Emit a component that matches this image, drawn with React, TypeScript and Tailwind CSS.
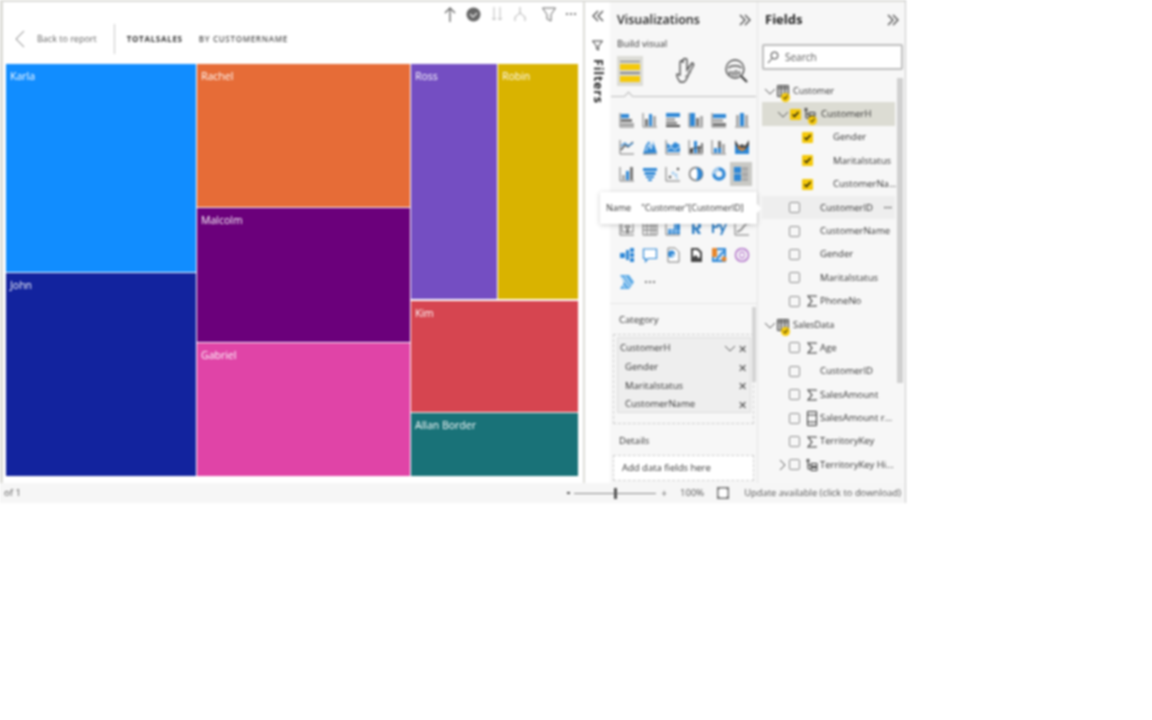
import type { ReactNode } from "react";

const B = "#2f88d6";
const G = "#777777";
const D = "#444";

function Ico({ children, size = 16 }: { children: ReactNode; size?: number }) {
  return (
    <svg width={size} height={size} viewBox="0 0 16 16" fill="none">
      {children}
    </svg>
  );
}

const axis = <path d="M1 1v14h14" stroke={G} strokeWidth="1" />;

// visual gallery, left to right, top to bottom
const vizIcons: ReactNode[] = [
  <>{axis}<rect x="2" y="2" width="8" height="4" fill={B} /><rect x="2" y="7" width="11" height="3" fill={G} /><rect x="2" y="11" width="13" height="3" fill="#aaa" /></>,
  <>{axis}<rect x="3" y="7" width="3" height="7" fill={G} /><rect x="7" y="2" width="3" height="12" fill={B} /><rect x="11" y="4" width="3" height="10" fill="#aaa" /></>,
  <><rect x="1" y="1" width="14" height="4" fill={B} /><rect x="1" y="6" width="9" height="3" fill="#aaa" /><rect x="1" y="10" width="11" height="2" fill={G} /><rect x="1" y="13" width="14" height="2" fill={D} /></>,
  <>{axis}<rect x="2" y="1" width="5" height="13" fill={B} /><rect x="8" y="6" width="3" height="8" fill={G} /><rect x="12" y="4" width="3" height="10" fill="#aaa" /></>,
  <>{axis}<rect x="2" y="2" width="13" height="4" fill={B} /><rect x="2" y="7" width="10" height="3" fill="#aaa" /><rect x="2" y="11" width="13" height="3" fill={G} /></>,
  <><path d="M1 15h14" stroke={G} /><rect x="2" y="3" width="3" height="11" fill="#aaa" /><rect x="6" y="1" width="4" height="13" fill={B} /><rect x="11" y="3" width="3" height="11" fill="#aaa" /></>,
  <>{axis}<path d="M2 11l4-5 3 2 5-5" stroke={D} strokeWidth="1.3" /><path d="M2 7l4-3 3 3 5-3" stroke={B} strokeWidth="1.3" /></>,
  <><path d="M1 15l3-9 3-4 2 5 2-5 4 12z" fill={B} /><path d="M4 12l3-7 2 5 2-7" stroke="#fff" /><path d="M1 15h14" stroke={G} /></>,
  <>{axis}<path d="M2 4l4 3 4-4 5 3v7H2z" fill={B} /><path d="M2 11l4-3 4 3 5-4" stroke="#fff" /></>,
  <>{axis}<rect x="2" y="10" width="3" height="4" fill={D} /><rect x="6" y="2" width="3" height="12" fill={B} /><rect x="10" y="7" width="2" height="7" fill={D} /><rect x="13" y="4" width="2" height="10" fill={G} /><path d="M2 10l5-1 7-1" stroke={D} /></>,
  <>{axis}<rect x="3" y="9" width="3" height="5" fill={B} /><rect x="7" y="2" width="3" height="12" fill={G} /><rect x="7" y="9" width="3" height="5" fill={B} /><rect x="11" y="5" width="3" height="9" fill="#aaa" /></>,
  <><path d="M1 1l4 6 3-2 3 2 4-6v14H1z" fill={D} /><path d="M1 5l4 6 3-3 3 3 4-5v9H1z" fill={B} /><path d="M4 8l4 3 3-2" stroke="#e8862a" strokeWidth="2" /></>,
  <>{axis}<rect x="3" y="9" width="3" height="5" fill="#aaa" /><rect x="7" y="5" width="3" height="9" fill={B} /><rect x="11" y="1" width="3" height="13" fill={G} /></>,
  <path d="M1 2h14v3H1zM2.500 6h11v3h-11zM4 10h8v2H4zM6 13h4v2H6z" fill={B} />,
  <>{axis}<circle cx="5" cy="11" r="1.200" fill={D} /><circle cx="8" cy="7" r="1.500" fill="#9cc8ee" /><circle cx="13" cy="3" r="1.200" fill={D} /><circle cx="11" cy="9" r="1.500" fill="#9cc8ee" /><circle cx="12" cy="12" r="1" fill="#9cc8ee" /></>,
  <><circle cx="8" cy="8" r="6.500" stroke={G} strokeWidth="1.500" fill="#fff" /><path d="M8 1.500A6.500 6.500 0 0 1 8 14.500C10 11 10 5 8 1.500z" fill={B} /></>,
  <><circle cx="8" cy="8" r="5" stroke={B} strokeWidth="3.500" /><path d="M8 3a5 5 0 0 0-5 5" stroke="#a9cdec" strokeWidth="3.500" /></>,
  <><rect x="1" y="1" width="7" height="6" fill={B} /><rect x="1" y="8" width="7" height="7" fill={B} /><rect x="9" y="1" width="6" height="4" fill="#aaa" /><rect x="9" y="6" width="6" height="5" fill="#aaa" /><rect x="9" y="12" width="6" height="3" fill="#aaa" /></>,
  <rect x="2" y="2" width="12" height="12" fill="#ccc" />,
  <rect x="2" y="2" width="12" height="12" fill="#ccc" />,
  <rect x="2" y="2" width="12" height="12" fill="#ccc" />,
  <rect x="2" y="2" width="12" height="12" fill="#ccc" />,
  <rect x="2" y="2" width="12" height="12" fill="#ccc" />,
  <rect x="2" y="2" width="12" height="12" fill="#ccc" />,
  <>{axis}<rect x="3" y="3" width="11" height="9" stroke={G} /><path d="M8 9l-2-3h5l-2 3v4H8z" fill="#fff" stroke={D} /></>,
  <path d="M1 2h14v13H1zM1 6h14M1 10h14M5 2v13M9 2v13M12 2v13" stroke={G} />,
  <>{axis}<rect x="3" y="9" width="12" height="5" fill={B} /><rect x="9" y="4" width="6" height="5" fill={B} /><path d="M3 11h12M7 9v5M11 4v10" stroke="#fff" strokeWidth=".6" /></>,
  <path d="M4 2h5a3.500 3.500 0 0 1 1 7l3 5h-3L7 9.300H6.500V14H4zM6.500 4v3.300H9a1.700 1.700 0 0 0 0-3.300z" fill="#2b7cc4" />,
  <path d="M1 2h4a2.500 2.500 0 0 1 0 6H3v5H1zM3 4v2h2a1 1 0 0 0 0-2zM8 4h2l2 5 2-5h2l-5 11H9l1.500-3.500z" fill="#2b7cc4" />,
  <>{axis}<path d="M3 12l4-2 3-4 5-4" stroke={G} strokeWidth="1.500" /><path d="M11 2h4v3" stroke="#aaa" /></>,
  <><rect x="1" y="6" width="5" height="5" fill={B} /><rect x="7" y="3" width="3" height="10" fill={B} /><rect x="11" y="1" width="4" height="4" fill={B} /><rect x="11" y="6" width="4" height="4" fill={B} /><rect x="11" y="11" width="4" height="4" fill={B} /></>,
  <path d="M1.500 2h13v9.500H6L3.500 14.500v-3h-2z" stroke={B} strokeWidth="1.200" fill="#fff" />,
  <><path d="M3 1h7l4 4v10H3z" stroke={G} fill="#fff" /><circle cx="6.500" cy="7" r="3.500" fill={B} /><path d="M6.500 7h3.500a3.500 3.500 0 0 1-3.500 3.500z" fill="#a9cdec" /></>,
  <><path d="M3 1h7l4 4v10H3z" fill={D} /><path d="M5 3h4l3 3v4l-3 3H5z" fill="#fff" /><path d="M5 13v-3l3-2 4 5z" fill={D} /></>,
  <><rect x="1" y="1" width="14" height="14" fill={B} /><rect x="3" y="3" width="10" height="10" fill="#d8ecfb" /><path d="M5 13L13 4" stroke={B} strokeWidth="2" /><rect x="1" y="1" width="5" height="9" fill="#e8862a" /><circle cx="13" cy="12" r="2.500" fill="#e8862a" /></>,
  <><circle cx="8" cy="8" r="6.500" stroke="#b070c8" strokeWidth="1.500" /><path d="M8 1v14M5 4l6 8M11 4l-6 8" stroke="#d0a8e0" /><circle cx="8" cy="8" r="2.500" stroke="#b070c8" fill="#fff" /></>,
  <><path d="M1 1h9l5 7-5 7H1l4-7z" fill="#5aa9e6" /><path d="M3 3l7 10M6 2l6 9M2 9l4 5" stroke="#fff" /></>,
];

function Chevron({ open = true }: { open?: boolean }) {
  return (
    <svg width="12" height="12" viewBox="0 0 12 12" fill="none" stroke="#555">
      <path d={open ? "M1 4l5 5 5-5" : "M4 1l5 5-5 5"} />
    </svg>
  );
}

function DoubleChevron({ left = false }: { left?: boolean }) {
  return (
    <svg width="12" height="12" viewBox="0 0 12 12" fill="none" stroke="#444" strokeWidth="1.200">
      <path d={left ? "M6 1L1 6l5 5M11 1L6 6l5 5" : "M1 1l5 5-5 5M6 1l5 5-5 5"} />
    </svg>
  );
}

function Check({ on = false }: { on?: boolean }) {
  if (on) {
    return (
      <span className="flex h-[11px] w-[11px] shrink-0 items-center justify-center rounded-[1px] bg-[#f5c90a]">
        <svg width="9" height="9" viewBox="0 0 9 9" fill="none" stroke="#111" strokeWidth="1.300"><path d="M1.500 4.500l2 2 4-4.500" /></svg>
      </span>
    );
  }
  return <span className="h-[11px] w-[11px] shrink-0 rounded-[2px] border border-[#909090] bg-[#f7f7f7]" />;
}

function Badge() {
  return (
    <span className="absolute -bottom-[5px] -right-[1px] flex h-[9px] w-[9px] items-center justify-center rounded-full bg-[#f5c90a]">
      <svg width="5" height="5" viewBox="0 0 5 5" fill="none" stroke="#111"><path d="M.5 2.500l1.500 1.500 2.500-3.500" /></svg>
    </span>
  );
}

function TableIcon() {
  return (
    <span className="relative block h-3 w-3 shrink-0">
      <svg width="12" height="12" viewBox="0 0 12 12"><path d="M.5.5h11v11H.5zM4 .5v11M8 .5v11M.5 3h11" fill="#ccc" stroke="#444" /></svg>
      <Badge />
    </span>
  );
}

function HierIcon({ badge = false }: { badge?: boolean }) {
  return (
    <span className="relative block h-3 w-3 shrink-0">
      <svg width="12" height="12" viewBox="0 0 12 12" fill="none" stroke="#333"><path d="M1 .5h2v2H1zM2 2.500V10h3M2 6h3M5 4.500h6v3H5zM5 8.500h6v3H5z" /></svg>
      {badge && <Badge />}
    </span>
  );
}

function Sigma() {
  return (
    <svg width="12" height="12" viewBox="0 0 12 12" fill="none" stroke="#333" strokeWidth="1.100" className="shrink-0">
      <path d="M10 2V1H2l4 5-4 5h8v-1" />
    </svg>
  );
}

function CalcIcon() {
  return (
    <svg width="12" height="15" viewBox="0 0 12 15" fill="none" stroke="#333" className="shrink-0">
      <path d="M1.500.5h9v14h-9zM1.500 4h9M1.500 11h9" />
    </svg>
  );
}

type Field = { name: string; icon?: ReactNode; more?: boolean; chev?: boolean };

const customerFields: Field[] = [
  { name: "CustomerID", more: true },
  { name: "CustomerName" },
  { name: "Gender" },
  { name: "Maritalstatus" },
  { name: "PhoneNo", icon: <Sigma /> },
];

const salesFields: Field[] = [
  { name: "Age", icon: <Sigma /> },
  { name: "CustomerID" },
  { name: "SalesAmount", icon: <Sigma /> },
  { name: "SalesAmount r...", icon: <CalcIcon /> },
  { name: "TerritoryKey", icon: <Sigma /> },
  { name: "TerritoryKey Hi...", icon: <HierIcon />, chev: true },
];

function FieldRow({ name, icon, more, chev }: Field) {
  return (
    <div className={`flex h-[23.4px] w-[133px] items-center ${more ? "bg-[#eeeeee]" : ""}`}>
      <span className="flex w-[27px] shrink-0 justify-end pr-[1px]">{chev && <Chevron open={false} />}</span>
      <Check />
      <span className="ml-[4px] flex w-[16px] shrink-0 justify-center">{icon}</span>
      <span className="whitespace-nowrap">{name}</span>
      {more && <span className="ml-auto pr-[3px] font-bold leading-none text-[#333]">···</span>}
    </div>
  );
}

function TableRow({ name }: { name: string }) {
  return (
    <div className="flex h-[23.4px] items-center gap-px pl-[2px] text-[9px]">
      <Chevron />
      <TableIcon />
      <span className="ml-[3px]">{name}</span>
    </div>
  );
}

function ChildRow({ name }: { name: string }) {
  return (
    <div className="flex h-[23.4px] items-center pl-[40px]">
      <Check on />
      <span className="ml-[20px] whitespace-nowrap">{name}</span>
    </div>
  );
}

function Cell({ name, color, className }: { name: string; color: string; className: string }) {
  return (
    <div className={`${className} px-[4px] py-[5px] text-[10.500px] leading-[14px] text-white`} style={{ backgroundColor: color }}>
      {name}
    </div>
  );
}

function WellRow({ name }: { name: string }) {
  return (
    <div className="flex h-[18.500px] items-center justify-between pl-[7px] pr-[3px]">
      <span>{name}</span>
      <span className="text-[11px] leading-none text-[#444]">✕</span>
    </div>
  );
}

export default function App() {
  return (
    <div className="h-[720px] w-[1152px] bg-white font-['Open_Sans',sans-serif] text-[#333] blur-[0.8px]">
      <div className="relative w-[906px] border-r border-[#c8c8c8]">
        <div className="flex h-[483px] border-t-2 border-[#dcdcd8]">
          {/* report canvas */}
          <div className="flex w-[583px] shrink-0 flex-col border-l-[3px] border-[#dcdcd8]">
            <div className="flex h-[24px] items-center justify-end gap-[10px] pr-[5px]">
              <svg width="12" height="15" viewBox="0 0 12 15" fill="none" stroke="#666" strokeWidth="1.300"><path d="M6 15V1M1 6l5-5 5 5" /></svg>
              <svg width="15" height="15" viewBox="0 0 15 15"><circle cx="7.500" cy="7.500" r="7" fill="#666" /><path d="M4 7l3 3 4-4" stroke="#ddd" strokeWidth="1.500" fill="none" /></svg>
              <svg width="12" height="14" viewBox="0 0 12 14" fill="none" stroke="#bbb"><path d="M3 0v13M1 11l2 2 2-2M9 0v13M7 11l2 2 2-2" /></svg>
              <svg width="14" height="14" viewBox="0 0 14 14" fill="none" stroke="#b0b0b0"><path d="M7 0v6M7 6L2 10v4M7 6l5 4v4" /></svg>
              <svg width="14" height="15" viewBox="0 0 14 15" fill="none" stroke="#666" className="ml-[5px]"><path d="M.5 1h13L9 7.500V14l-4-2V7.500z" /></svg>
              <span className="flex w-[12px] gap-[2px]">
                <span className="h-[2px] w-[2px] rounded-full bg-[#555]" />
                <span className="h-[2px] w-[2px] rounded-full bg-[#555]" />
                <span className="h-[2px] w-[2px] rounded-full bg-[#555]" />
              </span>
            </div>
            <div className="mb-[12px] flex h-[26px] items-center pl-[12px]">
              <svg width="10" height="18" viewBox="0 0 10 18" fill="none" stroke="#777"><path d="M9 1L1 9l8 8" /></svg>
              <span className="ml-[12px] text-[9px] text-[#666]">Back to report</span>
              <span className="ml-[17px] h-[30px] w-px bg-[#c8c8c8]" />
              <span className="ml-[12px] text-[8px] font-bold tracking-[0.7px] text-[#333]">TOTALSALES</span>
              <span className="ml-[16px] text-[8px] font-semibold tracking-[0.7px] text-[#555]">BY CUSTOMERNAME</span>
            </div>
            {/* treemap */}
            <div className="ml-[3px] flex h-[412px] w-[572px] gap-px">
              <div className="flex w-[190px] flex-col gap-px">
                <Cell name="Karla" color="#118dff" className="h-[208px]" />
                <Cell name="John" color="#12239e" className="flex-1" />
              </div>
              <div className="flex w-[213px] flex-col gap-px">
                <Cell name="Rachel" color="#e66c37" className="h-[143px]" />
                <Cell name="Malcolm" color="#6b007b" className="h-[134px]" />
                <Cell name="Gabriel" color="#e044a7" className="flex-1" />
              </div>
              <div className="flex flex-1 flex-col gap-[1.500px]">
                <div className="flex h-[235px] gap-px">
                  <Cell name="Ross" color="#744ec2" className="w-[86px]" />
                  <Cell name="Robin" color="#d9b300" className="flex-1" />
                </div>
                <Cell name="Kim" color="#d64550" className="h-[111px]" />
                <Cell name="Allan Border" color="#197278" className="flex-1" />
              </div>
            </div>
          </div>

          {/* filters rail */}
          <div className="flex w-[27px] shrink-0 flex-col items-center border-l-2 border-[#dcdcd8] pt-[8px]">
            <DoubleChevron left />
            <svg width="11" height="11" viewBox="0 0 11 11" fill="none" stroke="#333" className="mt-[18px]"><path d="M.5 1h10L6.500 6v4l-2-1V6z" /></svg>
            <span className="mt-[8px] text-[12.500px] font-bold leading-none tracking-[0.8px] text-[#222] [writing-mode:vertical-rl]">Filters</span>
          </div>

          {/* visualizations pane */}
          <div className="relative flex w-[147px] shrink-0 flex-col bg-[#f7f7f7]">
            <div className="flex h-[36px] items-center justify-between pl-[7px] pr-[6px]">
              <span className="text-[12.500px] font-semibold text-[#222]">Visualizations</span>
              <DoubleChevron />
            </div>
            <div className="pl-[7px] text-[9.500px] leading-[12px]">Build visual</div>
            <div className="mt-[5px] flex h-[32px] items-center pl-[7px]">
              <span className="flex h-[30px] w-[26px] flex-col items-center justify-center gap-[2px] bg-[#dcdcd6]">
                <span className="h-px w-[20px] bg-[#777]" />
                <span className="h-[6px] w-[20px] bg-[#f5c90a]" />
                <span className="h-[2px] w-[20px] bg-[#888]" />
                <span className="h-[6px] w-[20px] bg-[#f5c90a]" />
              </span>
              <svg width="22" height="26" viewBox="0 0 22 26" fill="none" stroke="#444" strokeWidth="1.300" className="ml-[31px]">
                <path d="M6 24c-2-3-4-6-3-8l3 1V5c0-3 3-3 3 0V2c0-2 4-2 4 0v10l5-7c2 0 2 2 1 3l-6 12c-1 2-2 4-3 4z" />
                <path d="M14 15l5-6M11 19l6-5" stroke="#888" />
              </svg>
              <svg width="24" height="26" viewBox="0 0 24 26" fill="none" className="ml-[29px]">
                <circle cx="10" cy="11" r="9" stroke="#444" strokeWidth="1.300" />
                <path d="M3 10c4-3 10-3 14 0" stroke="#777" strokeWidth="2" />
                <path d="M5 17v-4M8 18v-5M11 18v-6M14 17v-4" stroke="#777" strokeWidth="2" />
                <path d="M16 18l6 6" stroke="#333" strokeWidth="2" />
              </svg>
            </div>
            <div className="relative mx-[1px] mt-[4px] h-[6px] border-b border-[#bbb]">
              <span className="absolute -bottom-[4px] left-[14px] h-[7px] w-[7px] rotate-45 border-l border-t border-[#bbb] bg-[#f7f7f7]" />
            </div>
            <div className="grid auto-rows-[27px] grid-cols-[repeat(6,23px)] justify-start pl-[5px] pt-[9px]">
              {vizIcons.map((icon, i) => (
                <span key={i} className={`flex items-center justify-center ${i === 17 ? "h-[24px] w-[22px] self-center bg-[#c9c9c5]" : ""}`}>
                  <Ico>{icon}</Ico>
                </span>
              ))}
              <span className="flex items-center justify-center gap-[2px]">
                <span className="h-[2px] w-[2px] rounded-full bg-[#555]" />
                <span className="h-[2px] w-[2px] rounded-full bg-[#555]" />
                <span className="h-[2px] w-[2px] rounded-full bg-[#555]" />
              </span>
            </div>
            <div className="mt-[8px] border-t border-[#e6e6e6] pl-[9px] pt-[9px] text-[9.500px] leading-[14px]">Category</div>
            <div className="mx-[3px] mt-[7px] h-[90px] border border-dashed border-[#cccccc] px-[3px] pt-[2px] text-[9.500px]">
              <div className="h-[76px] w-[134px] rounded-[1px] border border-[#dcdcdc] bg-[#eeeeee]">
                <div className="flex h-[20px] items-center justify-between pl-[2px] pr-[3px]">
                  <span>CustomerH</span>
                  <span className="flex items-center gap-[2px]">
                    <Chevron />
                    <span className="text-[11px] leading-none text-[#444]">✕</span>
                  </span>
                </div>
                <WellRow name="Gender" />
                <WellRow name="Maritalstatus" />
                <WellRow name="CustomerName" />
              </div>
            </div>
            <div className="mt-[10px] pl-[9px] text-[9.500px] leading-[14px]">Details</div>
            <div className="mx-[3px] mt-[7px] flex h-[26px] items-center border border-dashed border-[#cccccc] bg-white pl-[8px] text-[9.500px]">
              Add data fields here
            </div>
            <span className="absolute left-[142px] top-[305px] h-[75px] w-[4px] bg-[#d4d4d4]" />
          </div>

          {/* fields pane */}
          <div className="relative flex flex-1 flex-col border-l border-[#e4e4e4] bg-[#f7f7f7] text-[9.500px]">
            <div className="flex h-[36px] items-center justify-between pl-[7px] pr-[6px]">
              <span className="text-[13px] font-bold text-[#222]">Fields</span>
              <DoubleChevron />
            </div>
            <div className="ml-[4px] mt-[6px] flex h-[26px] w-[141px] items-center gap-[6px] rounded-[2px] border-2 border-[#bdbdbd] bg-white pl-[3px] text-[10px] text-[#555]">
              <svg width="12" height="13" viewBox="0 0 12 13" fill="none" stroke="#333"><circle cx="7.500" cy="4.500" r="3.500" /><path d="M5 7.500L1 12" /></svg>
              Search
            </div>
            <div className="mt-[9px] pl-[4px]">
              <TableRow name="Customer" />
              <div className="flex h-[23.4px] w-[133px] items-center bg-[#dcdcd3] pl-[15px]">
                <Chevron />
                <span className="w-[1px]" />
                <Check on />
                <span className="ml-[3px]"><HierIcon badge /></span>
                <span className="ml-[5px]">CustomerH</span>
              </div>
              <ChildRow name="Gender" />
              <ChildRow name="Maritalstatus" />
              <ChildRow name="CustomerNa..." />
              {customerFields.map((f) => <FieldRow key={f.name} {...f} />)}
              <TableRow name="SalesData" />
              {salesFields.map((f) => <FieldRow key={f.name} {...f} />)}
            </div>
            <span className="absolute left-[139px] top-[76px] h-[305px] w-[6px] bg-[#d0d0d0]" />
          </div>
        </div>

        {/* status bar */}
        <div className="flex h-[20px] items-center justify-between bg-[#f6f6f6] pl-[4px] pr-[4px] text-[9.500px] text-[#555]">
          <span>of 1</span>
          <div className="flex items-center">
            <span className="h-[2px] w-[3px] bg-[#555]" />
            <span className="relative ml-[4px] h-px w-[82px] bg-[#888]">
              <span className="absolute -top-[5px] left-[40px] h-[11px] w-[3px] bg-[#555]" />
            </span>
            <span className="ml-[5px] text-[10px]">+</span>
            <span className="ml-[13px]">100%</span>
            <svg width="12" height="12" viewBox="0 0 12 12" className="ml-[13px]"><rect width="12" height="12" fill="#777" /><path d="M3 1.500h6L10.500 3v6L9 10.500H3L1.500 9V3z" fill="#fff" /></svg>
            <span className="ml-[15px] text-[9.400px]">Update available (click to download)</span>
          </div>
        </div>

        {/* hover tooltip */}
        <div className="absolute left-[600px] top-[192px] flex h-[32px] w-[157px] items-center bg-white pl-[6px] text-[9px] shadow-[0_1px_5px_rgba(0,0,0,0.2)]">
          <span>Name</span>
          <span className="ml-[10px] whitespace-nowrap tracking-[-0.1px]">"Customer"[CustomerID]</span>
          <span className="absolute -right-[3px] top-[13px] h-[7px] w-[7px] rotate-45 bg-white" />
        </div>
      </div>
    </div>
  );
}
